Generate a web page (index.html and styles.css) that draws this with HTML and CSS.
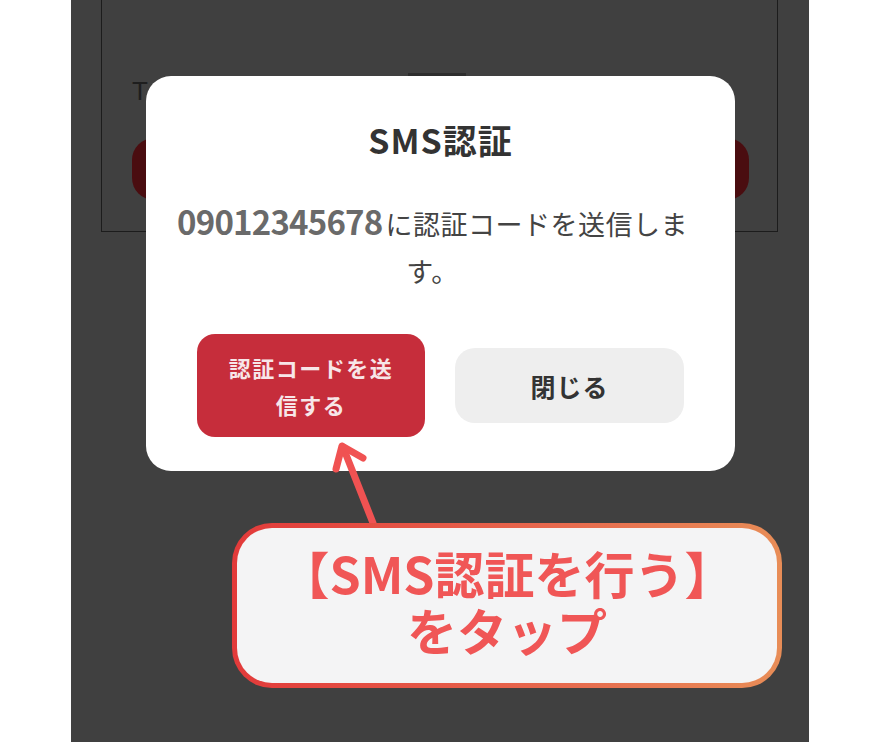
FILE: index.html
```html
<!DOCTYPE html>
<html lang="ja">
<head>
<meta charset="utf-8">
<link rel="stylesheet" href="styles.css">
</head>
<body>
<div class="screen">
  <div class="card">
    <div class="card-label">T</div>
    <div class="card-btn"></div>
  </div>

  <div class="modal">
    <div class="modal-notch"></div>
    <h2 class="modal-title">SMS認証</h2>
    <p class="modal-body"><span class="phone">09012345678</span>に認証コードを送信します。</p>
    <div class="modal-actions">
      <button class="btn btn-primary">認証コードを送<br>信する</button>
      <button class="btn btn-secondary">閉じる</button>
    </div>
  </div>

  <svg class="arrow" width="60" height="100" viewBox="0 0 60 100">
    <g fill="none" stroke="#f05252" stroke-width="7" stroke-linecap="round" stroke-linejoin="round">
      <path d="M51 90 L21 14"/>
      <path d="M14 36 L20 13 L41 25"/>
    </g>
  </svg>

  <div class="callout">
    <p class="callout-text">【SMS認証を行う】<br>をタップ</p>
  </div>
</div>
</body>
</html>
```

FILE: styles.css
```css
html, body {
  margin: 0;
  padding: 0;
  background: #ffffff;
}
body {
  width: 880px;
  height: 742px;
  overflow: hidden;
  font-family: "Noto Sans CJK JP", "Noto Sans", sans-serif;
}
.screen {
  position: relative;
  margin-left: 71px;
  width: 738px;
  height: 742px;
  background: #404040;
  overflow: hidden;
}
.card {
  margin-left: 30px;
  width: 677px;
  height: 232px;
  border: 1px solid #1c1c1c;
  border-top: none;
  box-sizing: border-box;
  padding-top: 74px;
  padding-left: 30px;
}
.card-label {
  font-family: "Liberation Sans", sans-serif;
  font-size: 26px;
  line-height: 34px;
  color: #1e1e1e;
}
.card-btn {
  margin-top: 30px;
  width: 617px;
  height: 62px;
  border-radius: 22px;
  background: #4a0d10;
}
.modal {
  position: absolute;
  left: 75px;
  top: 76px;
  width: 589px;
  height: 395px;
  border-radius: 25px;
  background: #ffffff;
  box-sizing: border-box;
  padding: 41px 51px 0;
  display: flex;
  flex-direction: column;
  align-items: center;
}
.modal-notch {
  position: absolute;
  top: -3px;
  left: 262px;
  width: 58px;
  height: 3px;
  background: #2e2e2e;
}
.modal-title {
  margin: 0;
  font-size: 34px;
  line-height: 46px;
  font-weight: 700;
  color: #333333;
  letter-spacing: 1px;
}
.modal-body {
  margin: 35px -16px 0 -32px;
  width: calc(100% + 48px);
  text-align: center;
  font-size: 27px;
  line-height: 47px;
  color: #444444;
  letter-spacing: 0.5px;
}
.phone {
  font-size: 33px;
  font-weight: 700;
  color: #6a6a6a;
  letter-spacing: -0.8px;
  margin-right: 3px;
}
.modal-actions {
  margin-top: 40px;
  width: 100%;
  display: flex;
  justify-content: space-between;
  align-items: center;
}
.btn {
  border: none;
  font-family: "Noto Sans CJK JP", sans-serif;
  font-weight: 700;
  cursor: pointer;
  padding: 0;
}
.btn-primary {
  width: 228px;
  height: 103px;
  border-radius: 18px;
  background: #c62d3b;
  color: #f7e6e8;
  font-size: 22px;
  line-height: 37px;
  letter-spacing: 1.5px;
}
.btn-secondary {
  width: 229px;
  height: 75px;
  border-radius: 20px;
  background: #eeeeee;
  color: #333333;
  font-size: 25px;
  letter-spacing: 1px;
}
.arrow {
  position: absolute;
  left: 251px;
  top: 433px;
}
.callout {
  position: absolute;
  left: 161px;
  top: 523px;
  width: 550px;
  height: 165px;
  box-sizing: border-box;
  border: 5px solid transparent;
  border-radius: 40px;
  background:
    linear-gradient(#f4f4f5, #f4f4f5) padding-box,
    linear-gradient(90deg, #e23a3a 0%, #e76a4e 60%, #e88d57 100%) border-box;
  display: flex;
  align-items: center;
  justify-content: center;
}
.callout-text {
  margin: -9px 0 0;
  text-align: center;
  font-size: 50px;
  line-height: 57px;
  font-weight: 700;
  color: #f05656;
}
```
